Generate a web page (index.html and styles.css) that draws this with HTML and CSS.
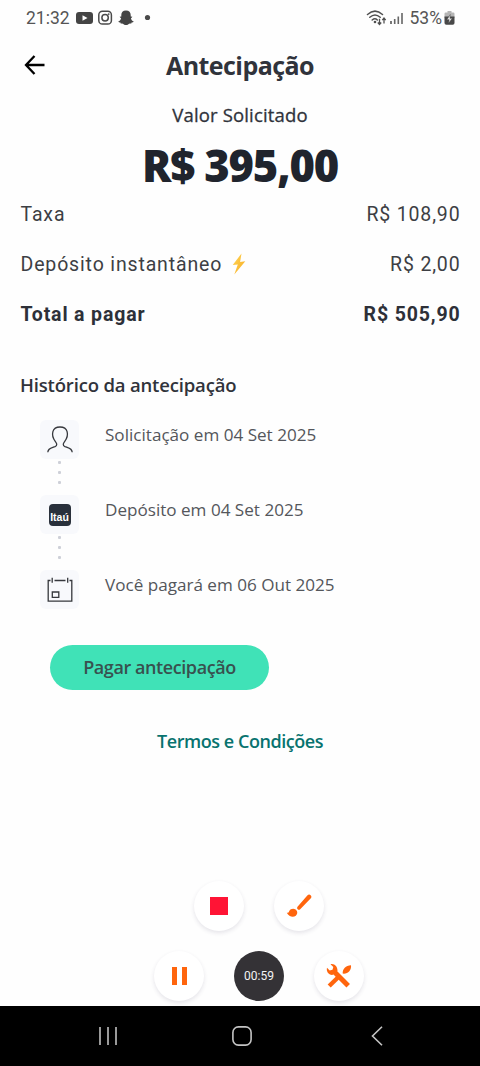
FILE: index.html
```html
<!DOCTYPE html>
<html lang="pt-BR">
<head>
<meta charset="utf-8">
<title>Antecipação</title>
<link rel="stylesheet" href="styles.css">
</head>
<body>
<div class="screen">
  <div class="status">
    <span class="clock">21:32</span>
    <svg class="notifications" width="76" height="18" viewBox="0 0 76 18">
      <rect x="0" y="3" width="17" height="12" rx="3" fill="#444"/>
      <path d="M6.5 6.2v5.6l5-2.8z" fill="#fff"/>
      <g fill="none" stroke="#4a4a4a" stroke-width="1.5"><rect x="22.8" y="2.3" width="12.6" height="12.8" rx="3.6"/><circle cx="29.1" cy="8.8" r="3.2"/></g>
      <circle cx="32.7" cy="5.1" r=".9" fill="#4a4a4a"/>
      <path d="M50 1.600c-3.200 0-4.700 2-4.700 4.500v1.500l-1.700.2 1.500 1.600c-.6 1.600-1.400 2.500-2.800 3 .3.900 1.300 1 2.100 1.200l.5 1.100c1.500-.3 2.200.1 3 .7 1.200.8 3 .8 4.200 0 .8-.6 1.500-1 3-.7l.5-1.100c.8-.2 1.800-.3 2.100-1.200-1.400-.5-2.200-1.400-2.800-3l1.500-1.600-1.700-.2V6.100c0-2.500-1.500-4.500-4.700-4.500z" fill="#444"/>
      <circle cx="71.500" cy="8.500" r="2.600" fill="#4a4a4a"/>
    </svg>
    <svg class="signal" width="40" height="20" viewBox="0 0 40 20">
      <g fill="none" stroke="#505050" stroke-width="1.500" stroke-linecap="round"><path d="M1.500 6.500Q9-.2 16.500 6.500M3.800 9.300Q9 4.700 14.200 9.300M6.200 12Q9 9.600 11.300 12"/></g>
      <circle cx="9" cy="14" r="1.300" fill="#505050"/>
      <path d="M13.500 10.800v5.400m-1.700-1.700 1.700 2 1.700-2M18 15.500v-5m-1.700 1.600 1.700-2 1.700 2" fill="none" stroke="#505050" stroke-width="1.300"/>
      <path d="M25 13v3" stroke="#555" stroke-width="1.600"/><path d="M28.700 11v5M32.300 8.500V16M36 5v11" stroke="#666" stroke-width="1.600"/>
    </svg>
    <span class="percent">53%</span>
    <svg width="11" height="16" viewBox="0 0 11 16">
      <path d="M3.500 1h4v1.500h1.700q1.300 0 1.300 1.300V8H.5V3.800q0-1.300 1.300-1.300h1.700z" fill="#b5b5b5"/>
      <path d="M.5 6.500h10V13q0 1.800-1.800 1.800H2.300Q.5 14.800.5 13z" fill="#484848"/>
      <path d="M6.300 4.500 2.800 9.700h2.300l-.5 3.600 3.700-5H6z" fill="#e8e8e8" stroke="#444" stroke-width=".5"/>
    </svg>
  </div>

  <header class="header">
    <svg class="back" width="22" height="22" viewBox="0 0 22 22"><path d="M20.500 11H2.500M10.500 2 2 11l8.500 9" fill="none" stroke="#000" stroke-width="2.300"/></svg>
    <h1 class="title">Antecipação</h1>
  </header>

  <section class="summary">
    <p class="caption">Valor Solicitado</p>
    <p class="amount">R$ 395,00</p>
  </section>

  <dl class="fees">
    <div class="fee"><dt>Taxa</dt><dd>R$ 108,90</dd></div>
    <div class="fee"><dt>Depósito instantâneo
      <svg class="bolt" width="14" height="22" viewBox="0 0 14 22"><defs><linearGradient id="bolt" x2="1" y2="1"><stop stop-color="#ffd85a"/><stop offset="1" stop-color="#f7a91e"/></linearGradient></defs><path d="M9.500.5.700 12l5.100-.6L2.300 21.500 13.300 8.200l-5.200.7z" fill="url(#bolt)"/></svg></dt><dd>R$ 2,00</dd></div>
    <div class="fee total"><dt>Total a pagar</dt><dd>R$ 505,90</dd></div>
  </dl>

  <h2 class="history-title">Histórico da antecipação</h2>
  <ol class="history">
    <li class="step">
      <div class="rail"><span class="tile"><svg width="26" height="28" viewBox="0 0 26 28"><path d="M.8 26.200c.4-4.500 4.200-4.300 7.200-5.600 2.600-1.200 1.900-3.100.4-5C5.800 12.300 5 9 5.900 5.700 6.700 2.700 9.300 1 13 1s6.300 1.700 7.100 4.700c.9 3.300.1 6.600-2.500 9.900-1.500 1.900-2.200 3.800.4 5 3 1.300 6.800 1.100 7.200 5.600" fill="none" stroke="#36383d" stroke-width="1.300"/></svg></span><span class="dots"><i></i><i></i><i></i></span></div>
      <p class="step-text">Solicitação em 04 Set 2025</p>
    </li>
    <li class="step">
      <div class="rail"><span class="tile"><span class="bank">Itaú</span></span><span class="dots"><i></i><i></i><i></i></span></div>
      <p class="step-text">Depósito em 04 Set 2025</p>
    </li>
    <li class="step">
      <div class="rail"><span class="tile"><svg width="26" height="26" viewBox="0 0 26 26" fill="none" stroke="#36383d" stroke-width="1.300"><path d="M3.500 3.500H1.200v20.700h23.600V3.500h-2.300M7.500 3.500h11M5.200.8v5M20.700.8v5M5.300 15h6.500v5.300H5.300z"/></svg></span></div>
      <p class="step-text">Você pagará em 06 Out 2025</p>
    </li>
  </ol>

  <button class="pay">Pagar antecipação</button>
  <a class="terms">Termos e Condições</a>

  <div class="recorder">
    <div class="tools upper">
      <span class="tool"><span class="stop"></span></span>
      <span class="tool"><svg width="26" height="24" viewBox="0 0 26 24" fill="#ff650d"><path d="m11.500 12.700 9.800-11.200q1.700-1.600 3.300-.3t0 3.400L14.200 15.300q-1.400 1-2.500 0t-.2-2.600z"/><path d="M.8 18.700c1.600.5 2-.6 2.500-1.700 1.100-2.300 4.200-3.100 6.300-1.500 2.300 1.700 2.100 4.700.2 6.200-2.700 2.200-6.900 1-9-3z"/></svg></span>
    </div>
    <div class="tools lower">
      <span class="tool"><span class="pause"></span></span>
      <span class="tool timer">00:59</span>
      <span class="tool"><svg width="26" height="26" viewBox="0 0 26 26"><path d="M8 8.500 22.200 22.700" stroke="#ff650d" stroke-width="5" fill="none"/><path d="M3.200 23 14 12.500" stroke="#ff650d" stroke-width="4.400" fill="none"/><path d="M4.500 1.200 7.300 4 6.500 6.800 3.700 7.400 1 4.800C0 8.800 3 12.500 7 11.800L11.500 8C11.700 3.600 8.500.3 4.500 1.200zM16.700 10.500c-.2-4.600 3-8 8.300-8.300.6 4.800-2.700 8.200-7 8.500z" fill="#ff650d"/></svg></span>
    </div>
  </div>

  <nav class="nav">
    <svg width="20" height="20" viewBox="0 0 20 20"><path d="M2 1v18M10 1v18M18 1v18" stroke="#b4b4b4" stroke-width="1.700"/></svg>
    <svg class="home" width="20" height="20" viewBox="0 0 20 20"><rect x=".9" y=".9" width="18.200" height="18.200" rx="5.500" fill="none" stroke="#c4c4c4" stroke-width="1.600"/></svg>
    <svg width="12" height="20" viewBox="0 0 12 20"><path d="M11 .8 1.500 10l9.500 9.200" fill="none" stroke="#c4c4c4" stroke-width="1.600"/></svg>
  </nav>
</div>
</body>
</html>
```
FILE: styles.css
```css
* { box-sizing: border-box; margin: 0; padding: 0; }
body { background: #fefefe; }
svg { display: block; flex: none; }
.screen { width: 480px; height: 1066px; display: flex; flex-direction: column; font-family: "Open Sans", sans-serif; color: #30333b; overflow: hidden; }
.status { height: 36px; padding: 0 25px 0 26px; display: flex; align-items: center; font: 17.5px Roboto, sans-serif; color: #555; }
.notifications { margin-left: 6px; }
.signal { margin-left: auto; margin-right: 4px; }
.percent { margin-right: 2px; }
.header { height: 60px; display: grid; grid-template-columns: 24px 1fr 24px; align-items: center; padding: 0 24px; }
.back { margin-bottom: 2px; }
.title { font-size: 25px; line-height: 36px; font-weight: 700; letter-spacing: -.55px; text-align: center; margin-bottom: 2px; }
.summary { height: 93px; text-align: center; }
.caption { font-size: 18.500px; line-height: 26px; font-weight: 500; padding-top: 6px; letter-spacing: .15px; -webkit-text-stroke: .3px #30333b; }
.amount { font-size: 43.500px; line-height: 60px; font-weight: 800; letter-spacing: -1.200px; color: #20242d; padding-top: 8px; }
.fees { padding: 0 19.500px 0 20.500px; font: 19.500px Roboto, sans-serif; letter-spacing: .85px; color: #3d3f44; }
.fee { height: 50px; display: flex; align-items: center; justify-content: space-between; }
.fee dt { display: flex; align-items: center; gap: 10px; }
.total { font-weight: 700; color: #2d3038; }
.history-title { margin: 32px 20px 0; font-size: 18.500px; line-height: 28px; font-weight: 600; letter-spacing: -.17px; }
.history { list-style: none; padding: 21px 40px 0; }
.step { height: 75px; display: flex; gap: 26px; }
.rail { width: 39px; display: flex; flex-direction: column; align-items: center; }
.tile { width: 39px; height: 39px; border-radius: 6px; background: #f8f9fc; display: flex; align-items: center; justify-content: center; }
.dots { height: 36px; padding-top: 2px; display: flex; flex-direction: column; gap: 7px; }
.dots i { width: 3px; height: 3px; border-radius: 1px; background: #ced0d8; }
.bank { width: 22px; height: 22px; margin-top: 1px; border-radius: 4px; background: #29303b; color: #fff; font: 700 10.500px/27px "Liberation Sans", sans-serif; text-align: center; }
.step-text { font-size: 17.100px; line-height: 29px; color: #54565b; }
.pay { width: 219px; height: 45px; margin: 0 0 0 50px; border: 0; border-radius: 23px; background: #40e2b7; font: 600 18px/45px "Open Sans", sans-serif; letter-spacing: -.42px; color: #38514f; text-align: center; flex: none; }
.terms { margin-top: 37px; text-align: center; font-size: 18px; line-height: 28px; font-weight: 600; letter-spacing: -.45px; color: #08736f; }
.recorder { margin-top: auto; height: 125px; flex: none; }
.tools { display: flex; height: 50px; }
.upper { gap: 30px; padding-left: 194px; margin-bottom: 20px; }
.lower { gap: 30px; padding-left: 154px; }
.tool { width: 50px; height: 50px; border-radius: 50%; background: #fff; box-shadow: 0 2px 4px rgba(50, 40, 80, .12); display: flex; align-items: center; justify-content: center; }
.stop { width: 18px; height: 18px; background: #ff1435; }
.pause { width: 15px; height: 18px; border: solid #ff650d; border-width: 0 5px; }
.timer { background: #343236; color: #f3f3f3; font: 12px Roboto, sans-serif; box-shadow: none; }
.nav { height: 60px; background: #000; display: flex; flex: none; align-items: center; justify-content: space-between; padding: 0 97px 0 98px; }
.home { margin-right: 6px; }
```
